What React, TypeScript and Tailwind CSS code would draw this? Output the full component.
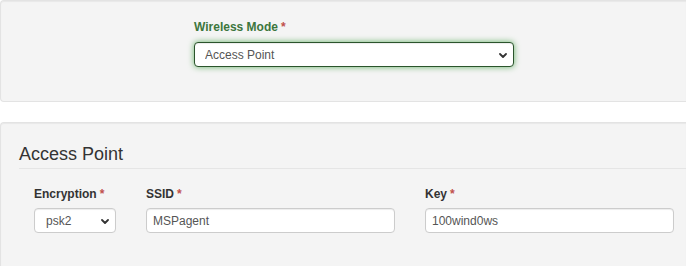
import React from 'react';

const Req = () => <span className="ml-[3px] text-[#c0504d]">*</span>;

const Chevron = () => (
  <svg
    className="pointer-events-none absolute right-[7px] top-1/2 -mt-[2px] h-[5px] w-[8px]"
    viewBox="0 0 8 5"
    fill="none"
  >
    <polyline points="1,1 4,4 7,1" stroke="#333" strokeWidth="1.8" strokeLinecap="round" strokeLinejoin="round" />
  </svg>
);

export default function App() {
  const font = { fontFamily: '"Liberation Sans", Arial, sans-serif' };

  return (
    <div className="h-[266px] w-[686px] overflow-hidden bg-white text-[#333]" style={font}>
      {/* Wireless mode panel */}
      <div className="h-[102px] rounded-l-[4px] border border-r-0 border-[#e3e3e3] bg-[#f4f4f4] pt-[18px] pl-[193px] shadow-[inset_0_1px_1px_rgba(0,0,0,0.05)]">
        <label className="block text-[12px] leading-[17px] font-bold text-[#3c763d]">
          Wireless Mode<Req />
        </label>
        <div className="relative mt-[6px] w-[320px]">
          <select
            defaultValue="ap"
            className="block h-[25px] w-full appearance-none rounded-[4px] border border-[#2b542c] bg-white pl-[10px] text-[12px] text-[#555] shadow-[inset_0_1px_1px_rgba(0,0,0,0.075),0_0_6px_#67b168] outline-none"
          >
            <option value="ap">Access Point</option>
            <option value="sta">Client</option>
          </select>
          <Chevron />
        </div>
      </div>

      {/* Access point panel */}
      <div className="mt-[20px] h-[160px] rounded-l-[4px] border border-r-0 border-[#e3e3e3] bg-[#f4f4f4] pt-[21px] pl-[18px] shadow-[inset_0_1px_1px_rgba(0,0,0,0.05)]">
        <div className="border-b border-[#e5e5e5] pb-[4px] text-[18px] leading-[20px] text-[#333]">
          Access Point
        </div>

        <div className="mt-[17px] flex gap-[30px] pl-[15px]">
          <div className="w-[82px]">
            <label className="block text-[12px] leading-[17px] font-bold">
              Encryption<Req />
            </label>
            <div className="relative mt-[5px]">
              <select
                defaultValue="psk2"
                className="block h-[25px] w-full appearance-none rounded-[4px] border border-[#ccc] bg-white pl-[11px] text-[12px] text-[#555] shadow-[inset_0_1px_1px_rgba(0,0,0,0.075)] outline-none"
              >
                <option value="none">none</option>
                <option value="psk">psk</option>
                <option value="psk2">psk2</option>
              </select>
              <Chevron />
            </div>
          </div>

          <div className="w-[249px]">
            <label className="block text-[12px] leading-[17px] font-bold">
              SSID<Req />
            </label>
            <input
              defaultValue="MSPagent"
              className="mt-[5px] block h-[25px] w-full rounded-[4px] border border-[#ccc] bg-white px-[6px] text-[12px] text-[#555] shadow-[inset_0_1px_1px_rgba(0,0,0,0.075)] outline-none"
            />
          </div>

          <div className="w-[249px]">
            <label className="block text-[12px] leading-[17px] font-bold">
              Key<Req />
            </label>
            <input
              defaultValue="100wind0ws"
              className="mt-[5px] block h-[25px] w-full rounded-[4px] border border-[#ccc] bg-white px-[6px] text-[12px] text-[#555] shadow-[inset_0_1px_1px_rgba(0,0,0,0.075)] outline-none"
            />
          </div>
        </div>
      </div>
    </div>
  );
}
